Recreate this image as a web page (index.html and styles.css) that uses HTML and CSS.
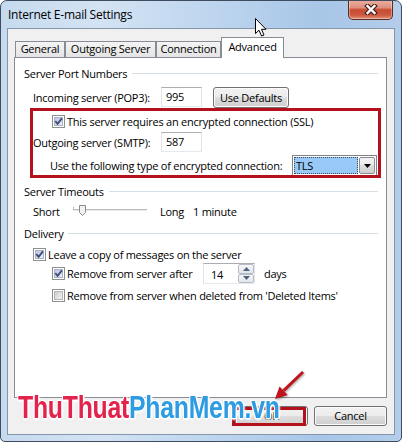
FILE: index.html
```html
<!DOCTYPE html>
<html>
<head>
<meta charset="utf-8">
<link rel="stylesheet" href="styles.css">
</head>
<body>
<svg class="defs" width="0" height="0" aria-hidden="true">
  <defs>
    <linearGradient id="cbOn" x1="0" y1="0" x2="1" y2="1">
      <stop offset="0" stop-color="#b9c3dc"/>
      <stop offset="1" stop-color="#eef1f8"/>
    </linearGradient>
    <linearGradient id="cbOff" x1="0" y1="0" x2="1" y2="1">
      <stop offset="0" stop-color="#cbcbcb"/>
      <stop offset="1" stop-color="#f6f6f6"/>
    </linearGradient>
  </defs>
</svg>
<div class="window">
  <div class="titlebar">
    <span class="title">Internet E-mail Settings</span>
    <div class="close">
      <svg width="14" height="11" viewBox="0 0 14 11">
        <path d="M3.5 2 L10.5 9 M10.5 2 L3.5 9" stroke="#4a221b" stroke-width="4.6" stroke-linecap="square" fill="none"/>
        <path d="M3.5 2 L10.5 9 M10.5 2 L3.5 9" stroke="#ffffff" stroke-width="2.4" stroke-linecap="square" fill="none"/>
      </svg>
    </div>
  </div>
  <div class="client">
    <div class="tabs">
      <div class="tab tab-general">General</div>
      <div class="tab tab-outgoing">Outgoing Server</div>
      <div class="tab tab-connection">Connection</div>
      <div class="tab tab-advanced active">Advanced</div>
    </div>
    <div class="panel">
      <div class="gh"><span>Server Port Numbers</span><i class="rule"></i></div>
      <div class="row r-incoming">
        <span class="lbl lbl-port">Incoming server (POP3):</span>
        <div class="textbox port">995</div>
        <div class="btn btn-defaults">Use Defaults</div>
      </div>
      <div class="row r-ssl">
        <svg class="cb" width="13" height="13" viewBox="0 0 13 13"><rect x=".5" y=".5" width="12" height="12" fill="#fff" stroke="#8e8f8f"/><rect x="2.5" y="2.5" width="8" height="8" fill="url(#cbOn)" stroke="#a9b2c6"/><path d="M3.3 6.2 L5.6 8.8 L9.9 3.4" fill="none" stroke="#3b4d78" stroke-width="1.9"/></svg>
        <span class="cbl">This server requires an encrypted connection (SSL)</span>
      </div>
      <div class="row r-outgoing">
        <span class="lbl lbl-port">Outgoing server (SMTP):</span>
        <div class="textbox port">587</div>
      </div>
      <div class="row r-combo">
        <span class="lbl lbl-combo">Use the following type of encrypted connection:</span>
        <div class="combo">
          <div class="combo-sel"><span>TLS</span></div>
          <div class="combo-btn">
            <svg width="7" height="4" viewBox="0 0 7 4"><path d="M0 0 H7 L3.5 4 Z" fill="#000"/></svg>
          </div>
        </div>
      </div>
      <div class="gh gh-2"><span>Server Timeouts</span><i class="rule"></i></div>
      <div class="row r-short">
        <span class="lbl lbl-short">Short</span>
        <svg class="slider" width="74" height="14" viewBox="0 0 74 14">
          <line x1="0" y1="5.5" x2="74" y2="5.5" stroke="#bcbcbc"/>
          <line x1="0" y1="6.5" x2="74" y2="6.5" stroke="#e8e8e8"/>
          <line x1="0.5" y1="3" x2="0.5" y2="6" stroke="#bcbcbc"/>
          <path d="M6.5 1.5 H12.5 V8.5 L9.5 11.5 L6.5 8.5 Z" fill="#f2f2f2" stroke="#8a8a8a"/>
        </svg>
        <span class="long">Long</span>
        <span>1 minute</span>
      </div>
      <div class="gh gh-3"><span>Delivery</span><i class="rule"></i></div>
      <div class="row r-leave">
        <svg class="cb" width="13" height="13" viewBox="0 0 13 13"><rect x=".5" y=".5" width="12" height="12" fill="#fff" stroke="#8e8f8f"/><rect x="2.5" y="2.5" width="8" height="8" fill="url(#cbOn)" stroke="#a9b2c6"/><path d="M3.3 6.2 L5.6 8.8 L9.9 3.4" fill="none" stroke="#3b4d78" stroke-width="1.9"/></svg>
        <span class="cbl">Leave a copy of messages on the server</span>
      </div>
      <div class="row r-after">
        <svg class="cb" width="13" height="13" viewBox="0 0 13 13"><rect x=".5" y=".5" width="12" height="12" fill="#fff" stroke="#8e8f8f"/><rect x="2.5" y="2.5" width="8" height="8" fill="url(#cbOn)" stroke="#a9b2c6"/><path d="M3.3 6.2 L5.6 8.8 L9.9 3.4" fill="none" stroke="#3b4d78" stroke-width="1.9"/></svg>
        <span class="cbl cbl-after">Remove from server after</span>
        <div class="spinner">
          <span class="spin-val">14</span>
          <div class="spin-btns">
            <div class="spin-b"><svg width="7" height="4" viewBox="0 0 7 4"><path d="M0 4 H7 L3.5 0 Z" fill="#4d6185"/></svg></div>
            <div class="spin-b"><svg width="7" height="4" viewBox="0 0 7 4"><path d="M0 0 H7 L3.5 4 Z" fill="#4d6185"/></svg></div>
          </div>
        </div>
        <span class="days">days</span>
      </div>
      <div class="row r-deleted">
        <svg class="cb" width="13" height="13" viewBox="0 0 13 13"><rect x=".5" y=".5" width="12" height="12" fill="#fff" stroke="#8e8f8f"/><rect x="2.5" y="2.5" width="8" height="8" fill="url(#cbOff)" stroke="#b5b5b5"/></svg>
        <span class="cbl">Remove from server when deleted from 'Deleted Items'</span>
      </div>
    </div>
    <div class="footer">
      <div class="btn btn-foot">OK</div>
      <div class="btn btn-foot">Cancel</div>
    </div>
  </div>

  <div class="redbox redbox-ssl"></div>
  <div class="redbox redbox-ok"></div>
  <svg class="arrow" width="40" height="40" viewBox="0 0 40 40">
    <g class="arrow-g">
      <line x1="33" y1="7" x2="13.6" y2="25.7" stroke="#c0141c" stroke-width="3"/>
      <path d="M5 34 L17.7 30 L9.5 21.4 Z" fill="#c0141c"/>
    </g>
  </svg>
  <div class="watermark"><span class="wm-red">ThuThuat</span><span class="wm-blue">PhanMem.vn</span></div>
  <svg class="cursor" width="14" height="21" viewBox="0 0 14 21">
    <path d="M1.5 1.5 L1.5 16.5 L5 13.2 L7.6 19 L10 18 L7.5 12.3 L12 12.3 Z" fill="#fff" stroke="#000" stroke-linejoin="round"/>
  </svg>
</div>
</body>
</html>
```
FILE: styles.css
```css
* { box-sizing: border-box; }
body {
  margin: 0;
  background: #fff;
  font-family: "Open Sans", "Segoe UI", "Liberation Sans", sans-serif;
  font-size: 11px;
  color: #000;
}
.defs { position: absolute; width: 0; height: 0; }

.window {
  position: relative;
  width: 402px;
  height: 442px;
  border: 1px solid #3e4c5e;
  border-radius: 7px 7px 5px 5px;
  background: linear-gradient(90deg, #c6daef 0%, #d3e3f3 25%, #bcd4ee 55%, #a8c6e8 80%, #b3cdea 100%);
  display: flex;
  flex-direction: column;
  overflow: hidden;
  letter-spacing: -0.25px;
  white-space: nowrap;
}
.titlebar {
  height: 27px;
  flex: none;
  display: flex;
  align-items: flex-start;
}
.title {
  padding-left: 7px;
  line-height: 28px;
  font-size: 12px;
  color: #000;
}
.close {
  margin-left: auto;
  margin-right: 8px;
  margin-top: -1px;
  width: 45px;
  height: 20px;
  border: 1px solid #5e2b22;
  border-top: none;
  border-radius: 0 0 5px 5px;
  background: linear-gradient(#eab0a3 0%, #e08f7c 40%, #c84a32 52%, #cc5a40 80%, #e3937a 100%);
  box-shadow: inset 0 0 0 1px rgba(255,255,255,0.35);
  display: flex;
  align-items: center;
  justify-content: center;
}

.client {
  flex: 1;
  margin: 0 6px 6px;
  border: 1px solid #8396ab;
  background: #f0f0f0;
  display: flex;
  flex-direction: column;
  padding: 8px 7px 7px 6px;
}
.tabs {
  display: flex;
  align-items: flex-end;
  height: 20px;
  margin-left: 1px;
  flex: none;
  position: relative;
  z-index: 1;
}
.tab {
  height: 16px;
  border: 1px solid #898c95;
  border-bottom: none;
  background: linear-gradient(#f4f4f4, #e4e4e4);
  text-align: center;
  line-height: 14px;
  flex: none;
}
.tab-general { width: 50px; }
.tab-outgoing { width: 91px; }
.tab-connection { width: 65px; }
.tab-advanced { width: 63px; }
.tab.active {
  height: 21px;
  margin-bottom: -1px;
  background: #fff;
  line-height: 17px;
}
.panel {
  height: 341px;
  flex: none;
  border: 1px solid #898c95;
  background: #fff;
  padding: 6px 8px 0 9px;
}
.gh {
  display: flex;
  align-items: center;
  height: 18px;
}
.gh .rule {
  flex: 1;
  height: 1px;
  background: #d5dfe5;
  margin-left: 5px;
}
.gh-2 { margin-top: 6px; }
.gh-3 { margin-top: 4px; }

.row { display: flex; align-items: center; }
.r-incoming { margin-top: 4px; height: 22px; padding-left: 9px; }
.r-ssl { margin-top: 5px; height: 16px; padding-left: 28px; }
.r-outgoing { margin-top: 2px; height: 22px; padding-left: 9px; }
.r-combo { margin-top: 2px; height: 21px; padding-left: 26px; }
.r-short { margin-top: 2px; height: 18px; padding-left: 9px; }
.r-leave { margin-top: 4px; height: 16px; padding-left: 9px; }
.r-after { margin-top: 1px; height: 21px; padding-left: 28px; }
.r-deleted { margin-top: 3px; height: 16px; padding-left: 28px; }

.lbl { flex: none; }
.lbl-port { width: 128px; }
.lbl-combo { width: 242px; }
.lbl-short { width: 40px; }
.long { width: 33px; margin-left: 13px; }
.cb { flex: none; display: block; }
.cbl { margin-left: 2px; }
.cbl-after { width: 136px; flex: none; }
.days { margin-left: 9px; }
.slider { display: block; flex: none; }

.textbox {
  height: 20px;
  border: 1px solid #e2e3ea;
  border-top-color: #abadb3;
  border-bottom-color: #e3e9ef;
  background: #fff;
  line-height: 18px;
  padding-left: 4px;
}
.port { width: 41px; }

.btn {
  border: 1px solid #707070;
  border-radius: 3px;
  background: linear-gradient(#f2f2f2 0%, #ebebeb 50%, #dddddd 50%, #cfcfcf 100%);
  box-shadow: inset 0 0 0 1px #fbfbfb;
  text-align: center;
  flex: none;
}
.btn-defaults { width: 76px; height: 21px; line-height: 19px; margin-left: 11px; }
.footer {
  display: flex;
  justify-content: flex-end;
  gap: 6px;
  margin-top: 8px;
  flex: none;
}
.btn-foot { width: 73px; height: 20px; line-height: 18px; }

.combo {
  width: 85px;
  height: 21px;
  border: 1px solid #7f8388;
  background: #fff;
  display: flex;
  padding: 1px;
  flex: none;
}
.combo-sel {
  flex: 1;
  background: #99c9f6;
  border: 1px dotted #3a4a60;
  padding-left: 1px;
  line-height: 15px;
  margin-right: 1px;
}
.combo-btn {
  width: 16px;
  border: 1px solid #8b8e93;
  border-radius: 2px;
  background: linear-gradient(#f3f3f3 0%, #ebebeb 50%, #dcdcdc 50%, #d0d0d0 100%);
  display: flex;
  align-items: center;
  justify-content: center;
}

.spinner {
  width: 52px;
  height: 21px;
  border: 1px solid #e2e3ea;
  border-top-color: #abadb3;
  border-bottom-color: #e3e9ef;
  background: #fff;
  display: flex;
  flex: none;
}
.spin-val { flex: 1; padding-left: 7px; line-height: 21px; }
.spin-btns { width: 16px; display: flex; flex-direction: column; }
.spin-b {
  flex: 1;
  border: 1px solid #b6bcc6;
  border-radius: 2px;
  background: linear-gradient(#f6f6f6, #e3e6ea);
  display: flex;
  align-items: center;
  justify-content: center;
}

.redbox {
  position: absolute;
  border: 3px solid #b3121c;
}
.redbox-ssl { left: 29px; top: 107px; width: 351px; height: 70px; }
.redbox-ok { left: 231px; top: 406px; width: 74px; height: 19px; }

.arrow { position: absolute; left: 269px; top: 364px; }
.arrow-g { filter: drop-shadow(1px 1px 1px rgba(0,0,0,0.35)); }

.watermark {
  position: absolute;
  left: 17px;
  top: 391px;
  font-family: "Liberation Sans", Arial, sans-serif;
  font-weight: bold;
  font-size: 31px;
  line-height: 31px;
  transform: scaleX(0.8);
  transform-origin: 0 0;
  letter-spacing: -0.3px;
  text-shadow: 1px 1px 0 #fff, -1px -1px 0 #fff, 1px -1px 0 #fff, -1px 1px 0 #fff, 0 2px 2px #fff, 2px 0 2px #fff;
}
.wm-red { color: #e3234b; }
.wm-blue { color: #2d9ce2; }

.cursor { position: absolute; left: 253px; top: 16px; }
```
